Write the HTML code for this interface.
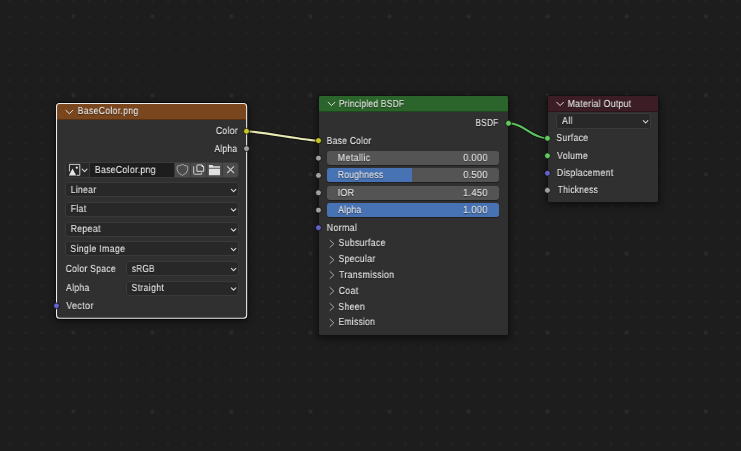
<!DOCTYPE html>
<html><head><meta charset="utf-8">
<style>
*{margin:0;padding:0;box-sizing:border-box}
html,body{width:741px;height:451px;overflow:hidden;background:#1d1d1d}
body{position:relative;font-family:"Liberation Sans",sans-serif;color:#e6e6e6}
svg{position:absolute;left:0;top:0}
.a{position:absolute}
.t{position:absolute;line-height:11px;height:11px;font-size:10.2px;letter-spacing:.35px;white-space:nowrap;text-rendering:geometricPrecision;will-change:transform;-webkit-text-stroke:0.2px rgba(230,230,230,.6);text-shadow:0 1px 1px rgba(0,0,0,.6)}
.node{position:absolute;background:#303030;box-shadow:0 2px 6px 1px rgba(0,0,0,.45)}
.hdr{position:absolute;left:0;top:0;right:0;height:16px;border-bottom:1px solid rgba(0,0,0,.28)}
.dd{position:absolute;background:#282828;border:1px solid #3a3a3a;border-radius:3px;height:15px}
.sl{position:absolute;background:#545454;border-radius:3px;height:14px;overflow:hidden;box-shadow:0 1px 0 rgba(0,0,0,.35)}
.fill{position:absolute;left:0;top:0;bottom:0;background:#4772b3}
.btn{position:absolute;background:#4b4b4b;top:163px;height:14px}
</style></head><body>
<svg width="741" height="451">
<defs>
<pattern id="pd" patternUnits="userSpaceOnUse" x="2.195" y="-7.005" width="15.81" height="15.81">
<circle cx="7.905" cy="7.905" r="1.5" fill="#232323"/>
</pattern>
<pattern id="pb" patternUnits="userSpaceOnUse" x="65.435" y="8.405" width="79.05" height="79.05">
<circle cx="7.905" cy="7.905" r="1.9" fill="#2b2b2b"/>
</pattern>
</defs>
<rect width="741" height="451" fill="url(#pd)"/>
<rect width="741" height="451" fill="url(#pb)"/>
<!-- links -->
<path d="M246.50 131.20 C 257.30 131.20, 307.70 140.80, 318.50 140.80" fill="none" stroke="rgba(0,0,0,.55)" stroke-width="3.8"/>
<path d="M246.50 131.20 C 257.30 131.20, 307.70 140.80, 318.50 140.80" fill="none" stroke="#e8e8b4" stroke-width="2.1"/>
<path d="M508.40 123.30 C 524.08 123.30, 531.92 138.30, 547.60 138.30" fill="none" stroke="rgba(0,0,0,.55)" stroke-width="3.5"/>
<path d="M508.40 123.30 C 524.08 123.30, 531.92 138.30, 547.60 138.30" fill="none" stroke="#5ec25e" stroke-width="2.0"/>
</svg>

<!-- ============ BaseColor node ============ -->
<div class="node" style="left:57px;top:104px;width:189.65px;height:214.3px;border-radius:2px;box-shadow:0 2px 6px 2px rgba(0,0,0,.45)">
  <div class="hdr" style="background:#79461d;border-radius:2px 2px 0 0"></div>
</div>
<svg width="741" height="451">
  <rect x="55.5" y="102.5" width="192.15" height="216.8" rx="4" fill="none" stroke="rgba(0,0,0,.65)" stroke-width="1"/>
  <rect x="56.5" y="103.5" width="190.15" height="214.8" rx="3" fill="none" stroke="#ececec" stroke-width="1.1"/>
</svg>
<!-- image selector row -->
<div class="a" style="left:65px;top:162px;width:174px;height:16px;border:1px solid #3a3a3a;border-radius:3px;background:#282828"></div>
<div class="a" style="left:89px;top:163px;width:85px;height:14px;background:#1d1d1d;border-left:1px solid #3a3a3a"></div>
<div class="a" style="left:174px;top:163px;width:64px;height:14px;background:#393939;border-radius:0 2px 2px 0"></div>
<div class="btn" style="left:175px;width:15px"></div>
<div class="btn" style="left:191px;width:15px"></div>
<div class="btn" style="left:207px;width:15px"></div>
<div class="btn" style="left:223px;width:15px;border-radius:0 2px 2px 0"></div>

<div class="dd" style="left:65px;top:182px;width:174px"></div>
<div class="dd" style="left:65px;top:202px;width:174px"></div>
<div class="dd" style="left:65px;top:222px;width:174px"></div>
<div class="dd" style="left:65px;top:241px;width:174px"></div>
<div class="dd" style="left:126px;top:261px;width:113px"></div>
<div class="dd" style="left:126px;top:281px;width:113px"></div>

<!-- ============ Principled BSDF ============ -->
<div class="node" style="left:318px;top:95px;width:191px;height:241px;border:1px solid #121212;border-radius:2.5px">
  <div class="hdr" style="background:#2b652b;border-radius:1.5px 1.5px 0 0"></div>
</div>
<div class="sl" style="left:327px;top:151px;width:172px"></div>
<div class="sl" style="left:327px;top:168px;width:172px"><div class="fill" style="width:85px"></div></div>
<div class="sl" style="left:327px;top:186px;width:172px"></div>
<div class="sl" style="left:327px;top:203px;width:172px"><div class="fill" style="width:100%"></div></div>

<!-- ============ Material Output ============ -->
<div class="node" style="left:547px;top:95px;width:112px;height:108px;border:1px solid #121212;border-radius:2.5px">
  <div class="hdr" style="background:#3c1d26;border-radius:1.5px 1.5px 0 0"></div>
</div>
<div class="dd" style="left:556px;top:113px;width:95px;height:16px"></div>

<div class="t" id="t0" style="top:106.00px;left:77px;padding-left:0.842px;transform:scaleX(0.8512);transform-origin:0 0;">BaseColor.png</div>
<div class="t" id="t1" style="top:126.00px;left:215px;padding-left:0.883px;transform:scaleX(0.8530);transform-origin:0 0;">Color</div>
<div class="t" id="t2" style="top:144.00px;left:214px;padding-left:0.469px;transform:scaleX(0.8277);transform-origin:0 0;">Alpha</div>
<div class="t" id="t3" style="top:165.00px;left:94px;padding-left:1.003px;transform:scaleX(0.8552);transform-origin:0 0;">BaseColor.png</div>
<div class="t" id="t4" style="top:185.00px;left:70px;padding-left:0.679px;transform:scaleX(0.8523);transform-origin:0 0;">Linear</div>
<div class="t" id="t5" style="top:204.00px;left:70px;padding-left:0.631px;transform:scaleX(0.8686);transform-origin:0 0;">Flat</div>
<div class="t" id="t6" style="top:224.00px;left:70px;padding-left:0.633px;transform:scaleX(0.8644);transform-origin:0 0;">Repeat</div>
<div class="t" id="t7" style="top:244.00px;left:70px;padding-left:0.353px;transform:scaleX(0.8639);transform-origin:0 0;">Single Image</div>
<div class="t" id="t8" style="top:264.00px;left:65px;padding-left:0.817px;transform:scaleX(0.8384);transform-origin:0 0;">Color Space</div>
<div class="t" id="t9" style="top:264.00px;left:131px;padding-left:1.107px;transform:scaleX(0.8015);transform-origin:0 0;">sRGB</div>
<div class="t" id="t10" style="top:283.00px;left:66px;padding-left:0.084px;transform:scaleX(0.8485);transform-origin:0 0;">Alpha</div>
<div class="t" id="t11" style="top:283.00px;left:131px;padding-left:0.500px;transform:scaleX(0.8640);transform-origin:0 0;">Straight</div>
<div class="t" id="t12" style="top:301.00px;left:66px;padding-left:0.183px;transform:scaleX(0.8862);transform-origin:0 0;">Vector</div>
<div class="t" id="t13" style="top:99.00px;left:338px;padding-left:0.932px;transform:scaleX(0.8196);transform-origin:0 0;">Principled BSDF</div>
<div class="t" id="t14" style="top:118.00px;left:475px;padding-left:0.605px;transform:scaleX(0.8051);transform-origin:0 0;">BSDF</div>
<div class="t" id="t15" style="top:136.00px;left:326px;padding-left:0.837px;transform:scaleX(0.8295);transform-origin:0 0;">Base Color</div>
<div class="t" id="t16" style="top:153.00px;left:337px;padding-left:0.872px;transform:scaleX(0.8734);transform-origin:0 0;">Metallic</div>
<div class="t" id="t17" style="top:153.00px;left:463px;padding-left:0.187px;transform:scaleX(0.9022);transform-origin:0 0;">0.000</div>
<div class="t" id="t18" style="top:170.00px;left:337px;padding-left:0.991px;transform:scaleX(0.8311);transform-origin:0 0;">Roughness</div>
<div class="t" id="t19" style="top:170.00px;left:463px;padding-left:0.137px;transform:scaleX(0.9087);transform-origin:0 0;">0.500</div>
<div class="t" id="t20" style="top:188.00px;left:337px;padding-left:0.631px;transform:scaleX(0.8798);transform-origin:0 0;">IOR</div>
<div class="t" id="t21" style="top:188.00px;left:463px;padding-left:0.096px;transform:scaleX(0.9069);transform-origin:0 0;">1.450</div>
<div class="t" id="t22" style="top:205.00px;left:338px;padding-left:0.191px;transform:scaleX(0.8367);transform-origin:0 0;">Alpha</div>
<div class="t" id="t23" style="top:205.00px;left:463px;padding-left:0.096px;transform:scaleX(0.9069);transform-origin:0 0;">1.000</div>
<div class="t" id="t24" style="top:223.00px;left:326px;padding-left:0.716px;transform:scaleX(0.8743);transform-origin:0 0;">Normal</div>
<div class="t" id="t25" style="top:238.00px;left:338px;padding-left:0.491px;transform:scaleX(0.8599);transform-origin:0 0;">Subsurface</div>
<div class="t" id="t26" style="top:254.00px;left:338px;padding-left:0.414px;transform:scaleX(0.8646);transform-origin:0 0;">Specular</div>
<div class="t" id="t27" style="top:270.00px;left:339px;padding-left:0.108px;transform:scaleX(0.8574);transform-origin:0 0;">Transmission</div>
<div class="t" id="t28" style="top:286.00px;left:338px;padding-left:0.669px;transform:scaleX(0.8707);transform-origin:0 0;">Coat</div>
<div class="t" id="t29" style="top:302.00px;left:338px;padding-left:0.353px;transform:scaleX(0.8585);transform-origin:0 0;">Sheen</div>
<div class="t" id="t30" style="top:317.00px;left:338px;padding-left:0.621px;transform:scaleX(0.8285);transform-origin:0 0;">Emission</div>
<div class="t" id="t31" style="top:99.00px;left:567px;padding-left:0.644px;transform:scaleX(0.8544);transform-origin:0 0;">Material Output</div>
<div class="t" id="t32" style="top:116.00px;left:562px;padding-left:0.096px;transform:scaleX(0.8623);transform-origin:0 0;">All</div>
<div class="t" id="t33" style="top:133.00px;left:556px;padding-left:0.308px;transform:scaleX(0.8562);transform-origin:0 0;">Surface</div>
<div class="t" id="t34" style="top:151.00px;left:557px;padding-left:0.063px;transform:scaleX(0.8572);transform-origin:0 0;">Volume</div>
<div class="t" id="t35" style="top:168.00px;left:556px;padding-left:0.969px;transform:scaleX(0.8588);transform-origin:0 0;">Displacement</div>
<div class="t" id="t36" style="top:185.00px;left:557px;padding-left:0.943px;transform:scaleX(0.8232);transform-origin:0 0;">Thickness</div>

<svg width="741" height="451">
<path d="M231.35 189.30 L233.60 191.70 L235.85 189.30" fill="none" stroke="#d8d8d8" stroke-width="1.05" stroke-linecap="round" stroke-linejoin="round"/>
<path d="M231.35 208.80 L233.60 211.20 L235.85 208.80" fill="none" stroke="#d8d8d8" stroke-width="1.05" stroke-linecap="round" stroke-linejoin="round"/>
<path d="M231.35 228.80 L233.60 231.20 L235.85 228.80" fill="none" stroke="#d8d8d8" stroke-width="1.05" stroke-linecap="round" stroke-linejoin="round"/>
<path d="M231.35 248.30 L233.60 250.70 L235.85 248.30" fill="none" stroke="#d8d8d8" stroke-width="1.05" stroke-linecap="round" stroke-linejoin="round"/>
<path d="M231.35 268.30 L233.60 270.70 L235.85 268.30" fill="none" stroke="#d8d8d8" stroke-width="1.05" stroke-linecap="round" stroke-linejoin="round"/>
<path d="M231.35 287.80 L233.60 290.20 L235.85 287.80" fill="none" stroke="#d8d8d8" stroke-width="1.05" stroke-linecap="round" stroke-linejoin="round"/>
<path d="M643.35 120.60 L645.60 123.00 L647.85 120.60" fill="none" stroke="#d8d8d8" stroke-width="1.05" stroke-linecap="round" stroke-linejoin="round"/>
<path d="M82.20 169.20 L84.60 171.60 L87.00 169.20" fill="none" stroke="#d8d8d8" stroke-width="1.1" stroke-linecap="round" stroke-linejoin="round"/>
<path d="M65.85 110.30 L69.35 113.70 L72.85 110.30" fill="none" stroke="#e0e0e0" stroke-width="1.0" stroke-linecap="round" stroke-linejoin="round"/>
<path d="M328.10 102.20 L331.50 105.60 L334.90 102.20" fill="none" stroke="#e0e0e0" stroke-width="1.0" stroke-linecap="round" stroke-linejoin="round"/>
<path d="M556.70 102.20 L560.10 105.60 L563.50 102.20" fill="none" stroke="#e0e0e0" stroke-width="1.0" stroke-linecap="round" stroke-linejoin="round"/>
<path d="M330.00 240.30 L333.80 243.80 L330.00 247.30" fill="none" stroke="#ababab" stroke-width="1.0" stroke-linecap="round" stroke-linejoin="round"/>
<path d="M330.00 256.40 L333.80 259.90 L330.00 263.40" fill="none" stroke="#ababab" stroke-width="1.0" stroke-linecap="round" stroke-linejoin="round"/>
<path d="M330.00 271.50 L333.80 275.00 L330.00 278.50" fill="none" stroke="#ababab" stroke-width="1.0" stroke-linecap="round" stroke-linejoin="round"/>
<path d="M330.00 287.50 L333.80 291.00 L330.00 294.50" fill="none" stroke="#ababab" stroke-width="1.0" stroke-linecap="round" stroke-linejoin="round"/>
<path d="M330.00 303.50 L333.80 307.00 L330.00 310.50" fill="none" stroke="#ababab" stroke-width="1.0" stroke-linecap="round" stroke-linejoin="round"/>
<path d="M330.00 319.30 L333.80 322.80 L330.00 326.30" fill="none" stroke="#ababab" stroke-width="1.0" stroke-linecap="round" stroke-linejoin="round"/>
  <!-- image icon -->
  <path d="M69.4 171.5 V164.4 H79.8 V175.3 H76.6" fill="none" stroke="#cdcdcd" stroke-width="1"/>
  <path d="M68.9 175.6 L72.5 168.6 L76.2 175.6 Z" fill="#e6e6e6"/>
  <circle cx="76.8" cy="167.7" r="1.15" fill="#e6e6e6"/>
  <!-- shield -->
  <path d="M182.4 164.4 Q185 165.9 187.6 166.2 V170 Q187.4 173.3 182.4 175.4 Q177.4 173.3 177.2 170 V166.2 Q179.8 165.9 182.4 164.4 Z" fill="none" stroke="#a6a6a6" stroke-width="0.95"/>
  <!-- copy icon -->
  <path d="M193.7 166.4 V173.4 Q193.7 174.2 194.5 174.2 H201.6 V172.5" fill="none" stroke="#d0d0d0" stroke-width="1"/>
  <path d="M196.9 171.3 V165.6 Q196.9 164.9 197.6 164.9 H201.9 L203.7 166.8 V171.3 Z" fill="none" stroke="#dcdcdc" stroke-width="1"/>
  <path d="M201.6 164.4 L204.2 167 H201.6 Z" fill="#e0e0e0"/>
  <!-- folder -->
  <path d="M208.9 165 H212.6 L213.3 166.3 H220 V167.8 H208.9 Z" fill="#e0e0e0"/>
  <rect x="208.9" y="168.7" width="11.1" height="6.5" fill="#e0e0e0"/>
  <!-- X -->
  <path d="M227.2 166.3 L234 173 M234 166.3 L227.2 173" stroke="#c8c8c8" stroke-width="1.15"/>
</svg>

<svg width="741" height="451">
<g stroke="rgba(0,0,0,.7)" stroke-width="1">
<circle cx="246.50" cy="131.20" r="2.95" fill="#c7c729"/>
<circle cx="246.50" cy="148.60" r="2.95" fill="#a1a1a1"/>
<circle cx="56.50" cy="305.80" r="2.95" fill="#6363c7"/>
<circle cx="508.50" cy="123.30" r="2.95" fill="#63c763"/>
<circle cx="318.50" cy="140.60" r="2.95" fill="#c7c729"/>
<circle cx="318.50" cy="158.10" r="2.95" fill="#a1a1a1"/>
<circle cx="318.50" cy="175.40" r="2.95" fill="#a1a1a1"/>
<circle cx="318.50" cy="192.80" r="2.95" fill="#a1a1a1"/>
<circle cx="318.50" cy="210.10" r="2.95" fill="#a1a1a1"/>
<circle cx="318.50" cy="227.70" r="2.95" fill="#6363c7"/>
<circle cx="547.50" cy="138.30" r="2.95" fill="#63c763"/>
<circle cx="547.50" cy="155.80" r="2.95" fill="#63c763"/>
<circle cx="547.50" cy="173.20" r="2.95" fill="#6363c7"/>
<circle cx="547.50" cy="190.30" r="2.95" fill="#a1a1a1"/>
</g>
</svg>
</body></html>
